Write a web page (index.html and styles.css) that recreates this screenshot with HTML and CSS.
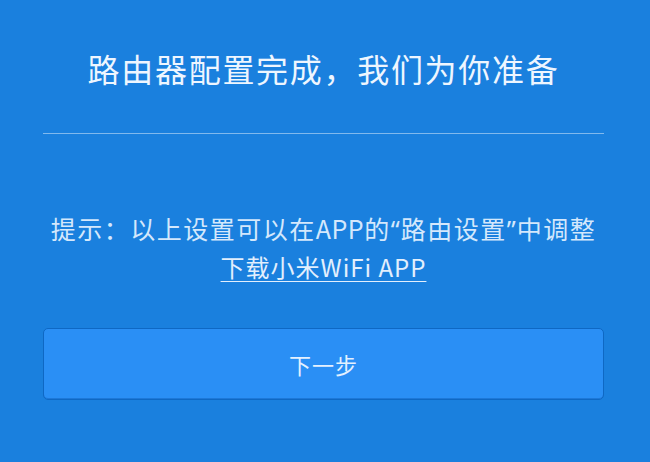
FILE: index.html
```html
<!DOCTYPE html>
<html lang="zh-CN">
<head>
<meta charset="utf-8">
<title>路由器配置完成</title>
<link rel="stylesheet" href="styles.css">
</head>
<body>
<main class="page">
  <h1 class="title">路由器配置完成，我们为你准备</h1>
  <div class="divider"></div>
  <p class="hint">提示：以上设置可以在<span class="latin">APP</span>的<span class="q">“</span>路由设置<span class="q">”</span>中调整</p>
  <p class="link-row"><a class="link" href="#">下载小米WiFi APP</a></p>
  <button class="next-btn" type="button">下一步</button>
</main>
</body>
</html>
```

FILE: styles.css
```css
html, body {
  margin: 0;
  padding: 0;
}
body {
  width: 650px;
  height: 462px;
  overflow: hidden;
  background: #1a80de;
  font-family: "Noto Sans CJK SC", "Noto Sans", sans-serif;
}
.page {
  display: flex;
  flex-direction: column;
  padding: 48px 46px 0 43px;
}
.title {
  margin: 0;
  font-size: 32px;
  font-weight: 400;
  line-height: 40px;
  letter-spacing: 1.7px;
  text-align: center;
  color: #eef6ff;
}
.divider {
  margin-top: 45px;
  height: 1px;
  background: rgba(255, 255, 255, 0.45);
}
.hint {
  margin: 75px 0 0;
  font-size: 25px;
  line-height: 38px;
  letter-spacing: 1.5px;
  text-align: center;
  color: #d4e8fc;
  white-space: nowrap;
}
.latin {
  letter-spacing: 0.5px;
}
.q {
  font-family: "Noto Sans", sans-serif;
  letter-spacing: 1px;
}
.link-row {
  margin: 0;
  line-height: 38px;
  text-align: center;
}
.link {
  font-size: 24px;
  letter-spacing: 1px;
  color: #e2effd;
  text-decoration: underline;
  text-underline-offset: 4px;
  text-decoration-thickness: 1px;
}
.next-btn {
  margin-top: 39px;
  height: 72px;
  width: 561px;
  border: 1px solid #0e68c4;
  border-radius: 5px;
  background: #2a8ff5;
  color: #e4f1ff;
  font-family: inherit;
  font-size: 22px;
  letter-spacing: 1px;
  box-shadow: inset 0 -1px 0 #1d78d8;
}
```
